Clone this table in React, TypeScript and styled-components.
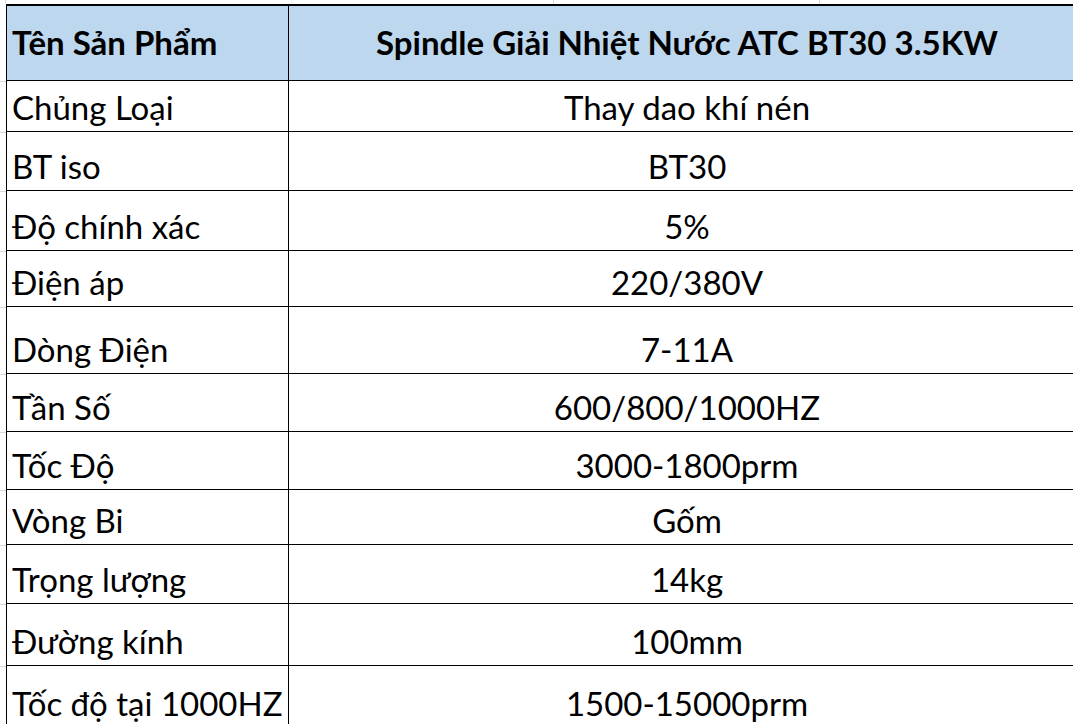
import * as React from 'react'
import styled, { createGlobalStyle } from 'styled-components'

const GlobalStyle = createGlobalStyle`
  html, body {
    margin: 0;
    padding: 0;
    background: #fff;
    overflow: hidden;
  }
`

const rows = [
  { label: 'Chủng Loại', value: 'Thay dao khí nén', height: 51 },
  { label: 'BT iso', value: 'BT30', height: 59 },
  { label: 'Độ chính xác', value: '5%', height: 60 },
  { label: 'Điện áp', value: '220/380V', height: 56 },
  { label: 'Dòng Điện', value: '7-11A', height: 67 },
  { label: 'Tần Số', value: '600/800/1000HZ', height: 58 },
  { label: 'Tốc Độ', value: '3000-1800prm', height: 58 },
  { label: 'Vòng Bi', value: 'Gốm', height: 55 },
  { label: 'Trọng lượng', value: '14kg', height: 59 },
  { label: 'Đường kính', value: '100mm', height: 62 },
  { label: 'Tốc độ tại 1000HZ', value: '1500-15000prm', height: 62 },
]

const Sheet = styled.div`
  width: 1080px;
  font-family: Lato, 'Open Sans', sans-serif;
  color: #000;
`

const GridStrip = styled.div`
  height: 4px;
  display: grid;
  grid-template-columns: 6px 548px 266px 1fr;
`

const GridCell = styled.div`
  border-right: 1px solid #d9d9d9;
`

const Row = styled.div<{ $h: number }>`
  display: grid;
  grid-template-columns: 6px 282px 1fr;
  height: ${p => p.$h}px;
  box-sizing: border-box;
`

const Gutter = styled.div`
  border-bottom: 1px solid #d9d9d9;
  margin-bottom: -1px;
`

const Cell = styled.div<{ $head?: boolean; $center?: boolean; $first?: boolean }>`
  display: flex;
  align-items: ${p => (p.$head ? 'center' : 'flex-end')};
  justify-content: ${p => (p.$center ? 'center' : 'flex-start')};
  background: ${p => (p.$head ? '#bdd7ee' : '#fff')};
  border-bottom: 1px solid #000;
  border-top: ${p => (p.$first ? '2px solid #000' : 'none')};
  border-left: 1px solid #000;
  box-sizing: border-box;
  padding: ${p => (p.$head ? '0 0 0 5px' : '0 0 3px 5px')};
  font-size: 33px;
  font-weight: ${p => (p.$head ? 700 : 400)};
  white-space: nowrap;
  overflow: hidden;
  line-height: 1.2;
`

export default function App() {
  return (
    <>
      <GlobalStyle />
      <Sheet>
        <GridStrip>
          <GridCell />
          <GridCell />
          <GridCell />
          <div />
        </GridStrip>
        <Row $h={77}>
          <Gutter />
          <Cell $head $first>Tên Sản Phẩm</Cell>
          <Cell $head $first $center>Spindle Giải Nhiệt Nước ATC BT30 3.5KW</Cell>
        </Row>
        {rows.map(r => (
          <Row key={r.label} $h={r.height}>
            <Gutter />
            <Cell>{r.label}</Cell>
            <Cell $center>{r.value}</Cell>
          </Row>
        ))}
      </Sheet>
    </>
  )
}
